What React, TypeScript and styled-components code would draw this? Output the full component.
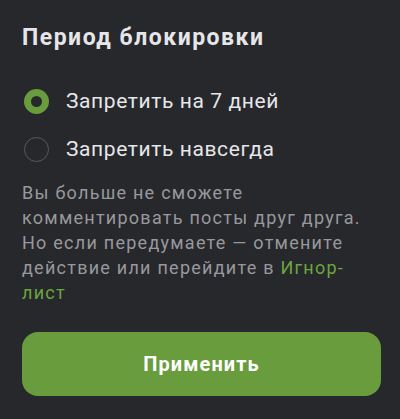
import React, { useState } from 'react';
import styled, { createGlobalStyle } from 'styled-components';

const GlobalStyle = createGlobalStyle`
  html, body {
    margin: 0;
    padding: 0;
    background: #27282c;
  }
  body {
    font-family: Roboto, "Liberation Sans", Arial, sans-serif;
  }
`;

const options = [
  { id: 'week', label: 'Запретить на 7 дней' },
  { id: 'forever', label: 'Запретить навсегда' },
];

export default function App() {
  const [period, setPeriod] = useState('week');

  return (
    <>
      <GlobalStyle />
      <Sheet>
        <Title>Период блокировки</Title>
        <Options>
          {options.map((option) => (
            <Option key={option.id} onClick={() => setPeriod(option.id)}>
              <Radio checked={period === option.id} />
              <OptionLabel>{option.label}</OptionLabel>
            </Option>
          ))}
        </Options>
        <Hint>
          Вы больше не сможете комментировать посты друг друга. Но если
          передумаете — отмените действие или перейдите в{' '}
          <HintLink href="#">Игнор-лист</HintLink>
        </Hint>
        <ApplyButton>Применить</ApplyButton>
      </Sheet>
    </>
  );
}

const Sheet = styled.div`
  box-sizing: border-box;
  width: 400px;
  height: 419px;
  padding: 22px 19px 0 22px;
  background: #27282c;
  display: flex;
  flex-direction: column;
`;

const Title = styled.h2`
  margin: 0;
  font-size: 23px;
  line-height: 31px;
  font-weight: 700;
  letter-spacing: 1.5px;
  color: #e6e6e9;
`;

const Options = styled.div`
  display: flex;
  flex-direction: column;
  gap: 24px;
  margin-top: 36px;
`;

const Option = styled.label`
  display: flex;
  align-items: center;
  gap: 17px;
  cursor: pointer;
  height: 24px;
`;

const Radio = styled.span<{ checked: boolean }>`
  box-sizing: border-box;
  flex: none;
  width: 25px;
  height: 25px;
  border-radius: 50%;
  margin-left: 2px;
  border: ${(p) => (p.checked ? '7px solid #689c3c' : '1px solid #58595d')};
`;

const OptionLabel = styled.span`
  font-size: 21px;
  line-height: 24px;
  letter-spacing: 0.6px;
  color: #e6e6e9;
`;

const Hint = styled.p`
  margin: 19px 0 0;
  font-size: 18px;
  line-height: 25px;
  letter-spacing: 1.25px;
  color: #98989c;
`;

const HintLink = styled.a`
  color: #6aa63e;
  text-decoration: none;
`;

const ApplyButton = styled.button`
  margin-top: 27px;
  height: 64px;
  width: 359px;
  border: none;
  border-radius: 16px;
  background: #689c3c;
  color: #ffffff;
  font-family: inherit;
  font-size: 20px;
  font-weight: 700;
  letter-spacing: 1.1px;
  cursor: pointer;
`;
